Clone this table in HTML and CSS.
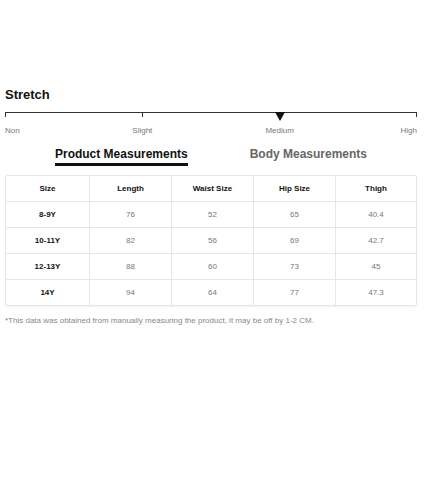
FILE: index.html
```html
<!DOCTYPE html>
<html>
<head>
<meta charset="utf-8">
<link rel="stylesheet" href="styles.css">
</head>
<body>
<div class="page">
  <h2 class="title">Stretch</h2>
  <div class="scale">
    <div class="track">
      <span class="tick t0"></span>
      <span class="tick t1"></span>
      <span class="tick t3"></span>
      <span class="marker"></span>
    </div>
    <div class="labels">
      <span class="l-non">Non</span>
      <span class="l-slight">Slight</span>
      <span class="l-medium">Medium</span>
      <span class="l-high">High</span>
    </div>
  </div>
  <div class="tabs">
    <span class="tab active">Product Measurements</span>
    <span class="tab">Body Measurements</span>
  </div>
  <div class="table">
    <div class="row head">
      <div>Size</div><div>Length</div><div>Waist Size</div><div>Hip Size</div><div>Thigh</div>
    </div>
    <div class="row">
      <div class="sz">8-9Y</div><div>76</div><div>52</div><div>65</div><div>40.4</div>
    </div>
    <div class="row">
      <div class="sz">10-11Y</div><div>82</div><div>56</div><div>69</div><div>42.7</div>
    </div>
    <div class="row">
      <div class="sz">12-13Y</div><div>88</div><div>60</div><div>73</div><div>45</div>
    </div>
    <div class="row">
      <div class="sz">14Y</div><div>94</div><div>64</div><div>77</div><div>47.3</div>
    </div>
  </div>
  <p class="note">*This data was obtained from manually measuring the product, it may be off by 1-2 CM.</p>
</div>
</body>
</html>
```

FILE: styles.css
```css
html, body {
  margin: 0;
  padding: 0;
  background: #fff;
}
.page {
  width: 412px;
  margin-left: 5px;
  padding-top: 87px;
  font-family: "Liberation Sans", Arial, sans-serif;
  color: #111;
}
.title {
  margin: 0;
  font-size: 13px;
  font-weight: bold;
  line-height: 16px;
  color: #111;
}
.scale {
  margin-top: 9px;
}
.track {
  position: relative;
  height: 1px;
  background: #333;
}
.tick {
  position: absolute;
  top: 0;
  width: 1px;
  height: 5px;
  background: #333;
}
.t0 { left: 0; }
.t1 { left: 137px; }
.t3 { right: 0; }
.marker {
  position: absolute;
  top: 0;
  left: 270px;
  width: 0;
  height: 0;
  border-left: 5px solid transparent;
  border-right: 5px solid transparent;
  border-top: 9px solid #111;
}
.labels {
  display: grid;
  grid-template-columns: repeat(6, 1fr);
  margin-top: 13px;
  font-size: 8px;
  line-height: 10px;
  color: #777;
}
.l-non { grid-column: 1; text-align: left; }
.l-slight { grid-column: 2 / span 2; text-align: center; }
.l-medium { grid-column: 4 / span 2; text-align: center; }
.l-high { grid-column: 6; text-align: right; }
.tabs {
  display: flex;
  justify-content: center;
  gap: 62px;
  margin-top: 11px;
}
.tab {
  font-size: 12px;
  font-weight: bold;
  line-height: 14px;
  color: #666;
  padding-bottom: 2px;
  border-bottom: 3px solid transparent;
}
.tab.active {
  color: #111;
  border-bottom-color: #111;
}
.table {
  margin-top: 9px;
  border: 1px solid #e6e6e6;
  border-radius: 2px;
  box-shadow: 0 1px 2px rgba(0,0,0,0.06);
}
.row {
  box-sizing: border-box;
  display: grid;
  grid-template-columns: 83px 82px 82px 82px 1fr;
  height: 26px;
  border-top: 1px solid #e6e6e6;
  font-size: 8px;
  color: #777;
}
.row.head {
  border-top: none;
  height: 25px;
  color: #111;
  font-weight: bold;
}
.row > div {
  display: flex;
  align-items: center;
  justify-content: center;
  border-left: 1px solid #e6e6e6;
}
.row > div:first-child {
  border-left: none;
}
.row .sz {
  color: #111;
  font-weight: bold;
}
.note {
  margin: 10px 0 0;
  font-size: 8px;
  line-height: 10px;
  color: #888;
}
```
